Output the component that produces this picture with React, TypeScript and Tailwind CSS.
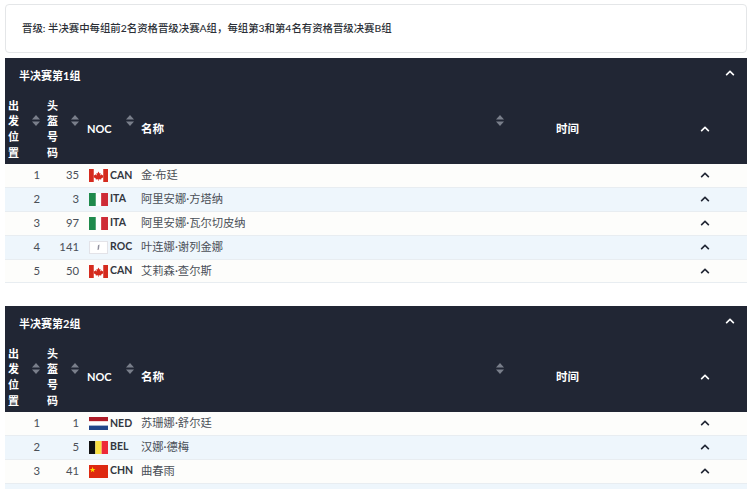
import React from "react";
import { FaChevronUp } from "react-icons/fa";

const font = "font-['Lato','Noto_Sans_CJK_SC',sans-serif]";

const Leaf = () => (
  <path d="M9 2.6 10 4.6 11 4.1 10.6 6.6 12 5.3 12.4 6.3 13.6 6.1 13.2 7.6 13.8 7.9 11.4 9.8 11.7 10.6 9.3 10.3 9.3 11.8 8.7 11.8 8.7 10.3 6.3 10.6 6.6 9.8 4.2 7.9 4.8 7.6 4.4 6.1 5.6 6.3 6 5.3 7.4 6.6 7 4.1 8 4.6Z" fill="#d52b1e" />
);

const Flag = ({ code }: { code: string }) => {
  let art = null;
  if (code === "CAN") {
    art = (
      <>
        <rect width="18" height="13" fill="#fff" />
        <rect width="4.5" height="13" fill="#d52b1e" />
        <rect x="13.5" width="4.5" height="13" fill="#d52b1e" />
        <Leaf />
      </>
    );
  } else if (code === "ITA") {
    art = (
      <>
        <rect width="6.5" height="13" fill="#1f8a4c" />
        <rect x="6.5" width="5" height="13" fill="#fff" />
        <rect x="11.5" width="6.5" height="13" fill="#ce2b37" />
      </>
    );
  } else if (code === "ROC") {
    art = (
      <>
        <rect x=".5" y=".5" width="17" height="12" fill="#fff" stroke="#e3e3e8" />
        <path d="M8.5 4.2 10 3.6 9.4 8.6 8 9Z" fill="#8f8f9d" />
      </>
    );
  } else if (code === "NED") {
    art = (
      <>
        <rect width="18" height="4.4" fill="#ae1c28" />
        <rect y="4.4" width="18" height="4.2" fill="#fff" />
        <rect y="8.6" width="18" height="4.4" fill="#21468b" />
      </>
    );
  } else if (code === "BEL") {
    art = (
      <>
        <rect width="6" height="13" fill="#111" />
        <rect x="6" width="6" height="13" fill="#fae042" />
        <rect x="12" width="6" height="13" fill="#ed2939" />
      </>
    );
  } else {
    art = (
      <>
        <rect width="18" height="13" fill="#de2910" />
        <path d="M3.4 1.8 4.1 3.9 6.2 3.9 4.5 5.2 5.1 7.3 3.4 6 1.7 7.3 2.3 5.2.6 3.9 2.7 3.9Z" fill="#ffde00" />
      </>
    );
  }
  return (
    <svg width="19" height="13" viewBox="0 0 18 13" preserveAspectRatio="none" className="shrink-0">
      {art}
    </svg>
  );
};

const SortIcon = () => (
  <svg width="8" height="11" viewBox="0 0 8 11" className="shrink-0 mb-[17px]">
    <path d="M4 0 8 4.5H0Z" fill="#7a7f8b" />
    <path d="M4 11 8 6.5H0Z" fill="#7a7f8b" />
  </svg>
);

type Row = { pos?: number; bib?: number; noc: string; code?: string; name?: string };

const groups: { title: string; rows: Row[] }[] = [
  {
    title: "半决赛第1组",
    rows: [
      { pos: 1, bib: 35, noc: "CAN", code: "CAN", name: "金·布廷" },
      { pos: 2, bib: 3, noc: "ITA", code: "ITA", name: "阿里安娜·方塔纳" },
      { pos: 3, bib: 97, noc: "ITA", code: "ITA", name: "阿里安娜·瓦尔切皮纳" },
      { pos: 4, bib: 141, noc: "ROC", code: "ROC", name: "叶连娜·谢列金娜" },
      { pos: 5, bib: 50, noc: "CAN", code: "CAN", name: "艾莉森·查尔斯" },
    ],
  },
  {
    title: "半决赛第2组",
    rows: [
      { pos: 1, bib: 1, noc: "NED", code: "NED", name: "苏珊娜·舒尔廷" },
      { pos: 2, bib: 5, noc: "BEL", code: "BEL", name: "汉娜·德梅" },
      { pos: 3, bib: 41, noc: "CHN", code: "CHN", name: "曲春雨" },
      // only the top edge of this row's flag is on screen
      { noc: "CHN" },
    ],
  },
];

const GroupTable = ({ title, rows }: { title: string; rows: Row[] }) => (
  <section className="mb-[22.5px]">
    <div className="bg-[#212634] text-white">
      <div className="flex h-[39px] items-center justify-between pb-[2px] pl-[14px] pr-[12px]">
        <span className="text-[11px] font-bold">{title}</span>
        <FaChevronUp size={10} className="mb-[7px]" />
      </div>
      <div className="flex h-[67px] items-center pb-[3px] text-[11px] font-bold">
        <div className="flex w-[38px] items-center justify-between px-[3px]">
          <span className="w-[12px] leading-[15.7px]">出发位置</span>
          <SortIcon />
        </div>
        <div className="flex w-[40px] items-center justify-between px-[4px]">
          <span className="w-[12px] leading-[15.7px]">头盔号码</span>
          <SortIcon />
        </div>
        <div className="flex w-[54px] items-center justify-between pl-[4px] pr-[3px]">
          <span>NOC</span>
          <SortIcon />
        </div>
        <div className="flex w-[367px] items-center justify-between pl-[4px]">
          <span className="text-[11.5px]">名称</span>
          <SortIcon />
        </div>
        <div className="w-[196px] pl-[52px] text-[11.5px]">时间</div>
        <FaChevronUp size={10} />
      </div>
    </div>
    {rows.map((r, i) => (
      <div
        key={i}
        className={`flex h-[23.9px] items-center border-b border-[#e8edf1] text-[11.3px] text-[#4a4f57] ${
          i % 2 === 1 ? "bg-[#eef6fc]" : "bg-[#fdfdfb]"
        }`}
      >
        <div className="w-[38px] pr-[3px] text-right">{r.pos}</div>
        <div className="w-[40px] pr-[4px] text-right">{r.bib}</div>
        <div className="flex w-[54px] items-center gap-[2px] pl-[6px]">
          <Flag code={r.noc} />
          {r.code && <span className="text-[10.5px] font-bold text-[#33373f]">{r.code}</span>}
        </div>
        <div className="w-[563px] pl-[4px]">{r.name}</div>
        {r.code && <FaChevronUp size={10} className="text-[#212634]" />}
      </div>
    ))}
  </section>
);

export default function App() {
  return (
    <div className={`h-[489px] w-[750px] overflow-hidden bg-white pl-[5px] pr-[3px] pt-[4px] ${font}`}>
      <div className="mb-[5px] flex h-[49px] items-center rounded-[4px] border border-[#e4e6e8] pl-[16px] text-[10.4px] font-medium text-[#2b2f36]">
        晋级: 半决赛中每组前2名资格晋级决赛A组，每组第3和第4名有资格晋级决赛B组
      </div>
      {groups.map((g) => (
        <GroupTable key={g.title} title={g.title} rows={g.rows} />
      ))}
    </div>
  );
}
